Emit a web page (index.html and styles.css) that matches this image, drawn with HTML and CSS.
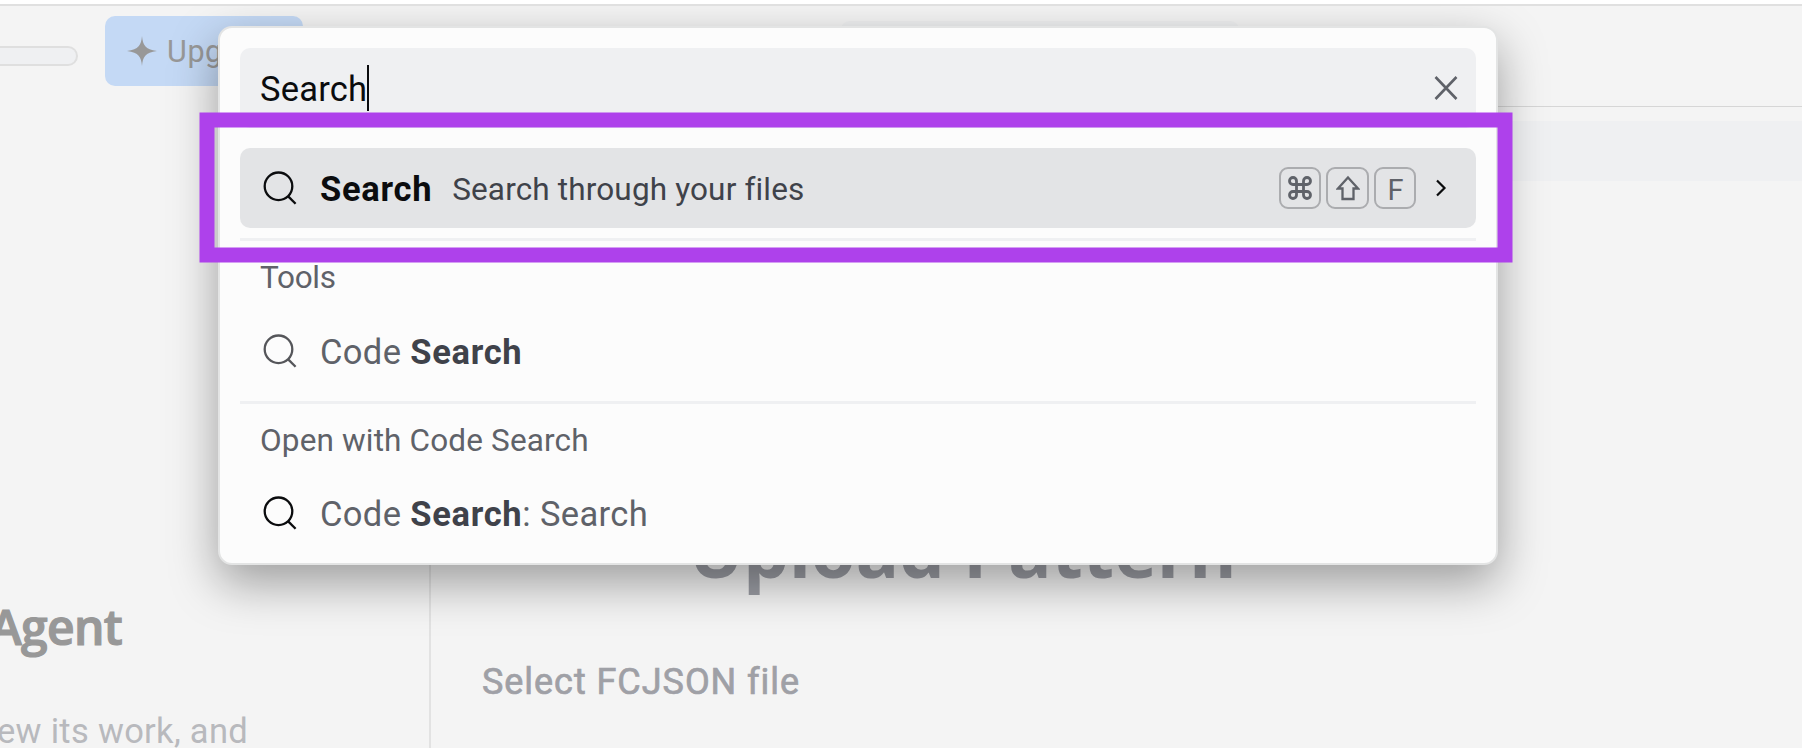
FILE: index.html
```html
<!DOCTYPE html>
<html lang="en">
<head>
<meta charset="utf-8">
<title>Search</title>
<link rel="stylesheet" href="styles.css">
</head>
<body>
<svg class="defs" aria-hidden="true">
  <symbol id="magnifier" viewBox="0 0 36 36">
    <circle cx="17.5" cy="16.3" r="13.8"/>
    <path d="M27.2 26.4 34.6 33.8"/>
  </symbol>
</svg>
<div class="app">
  <div class="topbar"></div>
  <header class="header">
    <div class="progress"></div>
    <div class="upgrade">
      <svg class="spark" viewBox="0 0 30 30"><path d="M15 0C15.9 9 18 13.4 30 15 18 16.600 15.900 21 15 30 14.100 21 12 16.600 0 15 12 13.400 14.100 9 15 0Z"/></svg>
      <span class="upgrade-label">Upg</span>
    </div>
    <div class="tab"></div>
  </header>
  <main class="columns">
    <aside class="side">
      <h2 class="agent">Agent</h2>
      <p class="agent-text">ew its work, and</p>
    </aside>
    <section class="content">
      <div class="band"></div>
      <h1 class="title">Upload Pattern</h1>
      <p class="select">Select FCJSON file</p>
    </section>
  </main>

  <div class="palette">
    <div class="field">
      <span class="query">Search</span><span class="caret"></span>
      <svg class="close" viewBox="0 0 24 24"><path d="M1.500 1 22.500 23M22.500 1 1.500 23"/></svg>
    </div>
    <div class="row row-active">
      <svg class="icon"><use href="#magnifier"/></svg>
      <div class="row-text"><b class="name">Search</b><span class="desc">Search through your files</span></div>
      <div class="keys">
        <span class="key"><svg class="cmd" viewBox="0 0 24 24"><path d="M15 6v12a3 3 0 1 0 3-3H6a3 3 0 1 0 3 3V6a3 3 0 1 0-3 3h12a3 3 0 1 0-3-3"/></svg></span>
        <span class="key key-shift"><svg class="shift" viewBox="0 0 24 26"><path d="M12 2.500 22 13.500H17.500V24H6.500V13.500H2Z"/></svg></span>
        <span class="key key-letter">F</span>
      </div>
      <svg class="chevron" viewBox="0 0 12 18"><path d="M2 1.500 9.500 9 2 16.500"/></svg>
    </div>
    <div class="rule rule-first"></div>
    <div class="label">Tools</div>
    <div class="row row-muted">
      <svg class="icon"><use href="#magnifier"/></svg>
      <div class="row-text"><span>Code <b>Search</b></span></div>
    </div>
    <div class="rule"></div>
    <div class="label label-open">Open with Code Search</div>
    <div class="row">
      <svg class="icon"><use href="#magnifier"/></svg>
      <div class="row-text"><span>Code <b>Search</b>: Search</span></div>
    </div>
  </div>

  <svg class="highlight" viewBox="0 0 1314 152"><rect x="8" y="8" width="1298" height="135"/></svg>
</div>
</body>
</html>
```
FILE: styles.css
```css
* { box-sizing: border-box; margin: 0; padding: 0; }
body { font-family: Roboto, "Noto Sans", sans-serif; color: #5f6269; }
svg { display: block; fill: none; flex: none; }
.defs { position: absolute; width: 0; height: 0; }

.app { position: relative; width: 1802px; height: 748px; overflow: hidden; background: #f4f4f4; display: flex; flex-direction: column; }
.topbar { height: 6px; background: #fff; border-bottom: 2px solid #e0e0e0; flex: none; position: relative; z-index: 3; }
.header { height: 100px; flex: none; display: flex; align-items: flex-start; }
.progress { width: 79px; height: 20px; margin: 40px 26px 0 -1px; border: 2px solid #dfdfdf; border-left: 0; border-radius: 0 10px 10px 0; background: #eff0f2; }
.upgrade { width: 198px; height: 70px; margin-top: 10px; margin-left: 1px; padding-left: 22px; border-radius: 10px; background: #c4d9f5; color: #989898; display: flex; align-items: center; gap: 10px; }
.spark { width: 30px; height: 30px; fill: #989898; }
.upgrade-label { font-size: 30.500px; line-height: 70px; padding-top: 2px; letter-spacing: .6px; }
.tab { width: 400px; height: 60px; margin-top: 15px; margin-left: 537px; border-radius: 10px; background: #eeeff0; }

.columns { flex: 1; display: flex; }
.side { width: 431px; border-right: 2px solid #e2e2e2; padding-top: 491px; display: flex; flex-direction: column; }
.agent { margin-left: -10px; font-family: "Open Sans", "Noto Sans", sans-serif; font-weight: 600; font-size: 48px; line-height: 60px; color: #989898; -webkit-text-stroke: 1.200px #989898; letter-spacing: -.7px; white-space: nowrap; }
.agent-text { margin-left: -3px; margin-top: 51px; font-size: 34.500px; line-height: 46px; color: #b8b9bd; letter-spacing: .3px; white-space: nowrap; }
.content { flex: 1; display: flex; flex-direction: column; }
.band { height: 75px; margin-left: 70px; background: linear-gradient(#d6d6d6 1px, #f4f4f4 1px, #f4f4f4 15px, #eff0f2 15px); }
.title { margin: 329px 0 0 258px; font-family: "Noto Sans", sans-serif; font-weight: 700; font-size: 72px; line-height: 80px; color: #9b9da4; letter-spacing: .1px; white-space: nowrap; }
.select { margin: 64px 0 0 51px; font-weight: 400; font-size: 36px; line-height: 56px; color: #9fa0a6; -webkit-text-stroke: .7px #9fa0a6; letter-spacing: .95px; white-space: nowrap; }

.palette { position: absolute; z-index: 2; left: 218px; top: 26px; width: 1280px; height: 539px; padding: 20px; border: 2px solid #e3e4e4; border-radius: 14px; background: #fcfcfc; box-shadow: 0 18px 48px rgba(0, 0, 0, .36); }
.field { height: 80px; margin-bottom: 20px; padding: 0 18px 0 20px; border-radius: 10px; background: #eff0f2; display: flex; align-items: center; }
.query { font-size: 34.500px; color: #0b0c0e; padding-top: 2px; letter-spacing: .2px; }
.caret { width: 2px; height: 46px; background: #0b0c0e; }
.close { width: 24px; height: 24px; margin-left: auto; stroke: #5f6269; stroke-width: 2.600; }
.row { height: 80px; padding: 0 29px 0 21px; border-radius: 10px; display: flex; align-items: center; color: #5f6269; }
.row-active { background: #e3e4e6; }
.icon { width: 36px; height: 36px; stroke: #0b0c0e; stroke-width: 2.300; }
.row-muted .icon { stroke: #55565a; }
.row-text { display: flex; align-items: baseline; gap: 20px; margin-left: 23px; padding-top: 2px; font-size: 34.500px; letter-spacing: .35px; white-space: nowrap; }
.row-text b { color: #3f424a; letter-spacing: .7px; }
.row-text .name { color: #0b0c0e; }
.desc { position: relative; top: -1px; font-size: 31.500px; color: #3f424a; letter-spacing: .15px; }
.keys { margin-left: auto; display: flex; gap: 5px; }
.key { width: 42px; height: 42px; border: 2px solid #abacaf; border-radius: 9px; display: flex; align-items: center; justify-content: center; }
.key-shift { width: 43px; }
.key-letter { font-size: 29px; line-height: 38px; padding-top: 3px; padding-left: 1px; }
.cmd { width: 28px; height: 28px; stroke: #5f6269; stroke-width: 2.400; }
.shift { width: 24px; height: 26px; stroke: #5f6269; stroke-width: 2.300; }
.chevron { width: 12px; height: 18px; margin-left: 19px; stroke: #0b0c0e; stroke-width: 2.200; }
.rule { height: 3px; margin: 10px 0 0; background: #eff0f2; }
.label { height: 70px; padding: 3px 20px 0; font-size: 31.500px; line-height: 68px; letter-spacing: -.3px; }
.label-open { height: 69px; letter-spacing: .15px; }

.highlight { position: absolute; z-index: 4; left: 199px; top: 112px; width: 1314px; height: 152px; stroke: #ae41eb; stroke-width: 15; pointer-events: none; }
```
